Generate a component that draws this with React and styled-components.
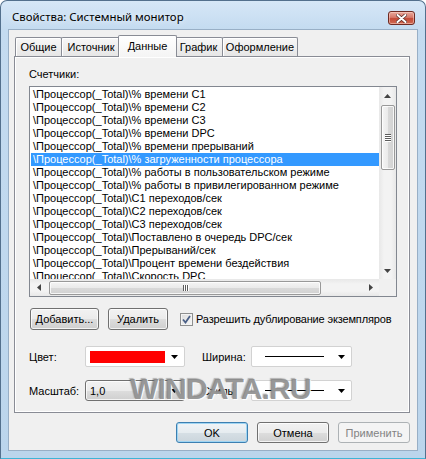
import React from 'react';
import styled, { createGlobalStyle, css } from 'styled-components';

const GlobalStyle = createGlobalStyle`
  html, body {
    margin: 0;
    padding: 0;
    background: #ffffff;
  }
  * {
    box-sizing: border-box;
  }
`;

const uiFont = `"Liberation Sans", Arial, sans-serif`;

const counters = [
  '\\Процессор(_Total)\\% времени C1',
  '\\Процессор(_Total)\\% времени C2',
  '\\Процессор(_Total)\\% времени C3',
  '\\Процессор(_Total)\\% времени DPC',
  '\\Процессор(_Total)\\% времени прерываний',
  '\\Процессор(_Total)\\% загруженности процессора',
  '\\Процессор(_Total)\\% работы в пользовательском режиме',
  '\\Процессор(_Total)\\% работы в привилегированном режиме',
  '\\Процессор(_Total)\\C1 переходов/сек',
  '\\Процессор(_Total)\\C2 переходов/сек',
  '\\Процессор(_Total)\\C3 переходов/сек',
  '\\Процессор(_Total)\\Поставлено в очередь DPC/сек',
  '\\Процессор(_Total)\\Прерываний/сек',
  '\\Процессор(_Total)\\Процент времени бездействия',
  '\\Процессор(_Total)\\Скорость DPC',
];

const tabs = [
  { title: 'Общие', width: 47 },
  { title: 'Источник', width: 60 },
  { title: 'Данные', width: 55 },
  { title: 'График', width: 49 },
  { title: 'Оформление', width: 76 },
];

const Window = styled.div`
  position: relative;
  width: 426px;
  height: 459px;
  display: flex;
  flex-direction: column;
  padding: 0 7px 7px 7px;
  border: 1px solid #53708d;
  border-bottom-color: #3fb4d6;
  border-radius: 7px 7px 0 0;
  background: linear-gradient(180deg, #d6e7f7 0, #c4dbf0 28px, #bbd5ec 100%);
  font-family: ${uiFont};
  font-size: 11px;
  color: #000;
`;

const TitleBar = styled.div`
  height: 28px;
  display: flex;
  align-items: flex-start;
  padding: 8px 3px 0 4px;
`;

const Title = styled.div`
  font-family: "Noto Sans", "Open Sans", sans-serif;
  font-size: 11.4px;
  line-height: 16px;
  color: #000;
  text-shadow: 0 0 6px rgba(255, 255, 255, 0.9);
`;

const CloseButton = styled.div`
  margin: 2px 0 0 auto;
  width: 27px;
  height: 14px;
  display: flex;
  align-items: center;
  justify-content: center;
  border: 1px solid #6e2a22;
  border-radius: 3px;
  background: linear-gradient(180deg, #e9a99c 0%, #d7796a 45%, #c44a37 55%, #cf6a52 100%);
  box-shadow: inset 0 0 0 1px rgba(255, 220, 210, 0.5);
`;

const Client = styled.div`
  flex: 1;
  display: flex;
  flex-direction: column;
  padding: 5px 7px 7px 5px;
  background: #f0f0f0;
  border: 1px solid #98afc6;
`;

const TabStrip = styled.div`
  position: relative;
  z-index: 1;
  height: 22px;
  display: flex;
  align-items: flex-end;
  padding-left: 1px;
  margin-bottom: -1px;
`;

const Tab = styled.div`
  width: ${({ $width }) => $width}px;
  height: 19px;
  margin-bottom: 1px;
  display: flex;
  align-items: center;
  justify-content: center;
  border: 1px solid #898c95;
  border-bottom: none;
  border-radius: 2px 2px 0 0;
  background: linear-gradient(180deg, #f7f7f7 0%, #e6e6e6 100%);
  box-shadow: inset 1px 1px 0 #ffffff;
  white-space: nowrap;
  margin-left: -1px;
  &:first-child {
    margin-left: 0;
  }

  ${({ $active }) =>
    $active &&
    css`
      width: ${({ $width }) => $width + 4}px;
      height: 22px;
      margin: 0 -2px 0 -3px;
      padding-bottom: 2px;
      background: linear-gradient(180deg, #ffffff 0%, #f4f4f4 100%);
      position: relative;
      z-index: 2;
    `}
`;

const Panel = styled.div`
  height: 357px;
  display: flex;
  flex-direction: column;
  padding: 11px 12px 0 14px;
  border: 1px solid #898c95;
  background: #f0f0f0;
  box-shadow: inset 0 0 0 1px #ffffff;
`;

const Label = styled.div`
  height: 13px;
  line-height: 13px;
  white-space: nowrap;
`;

const ListBox = styled.div`
  margin-top: 5px;
  width: 368px;
  height: 211px;
  display: grid;
  grid-template-columns: 1fr 17px;
  grid-template-rows: 1fr 17px;
  border: 1px solid #828790;
  background: #ffffff;
`;

const Rows = styled.div`
  overflow: hidden;
  padding: 1px 0 0 1px;
`;

const Row = styled.div`
  height: 13px;
  line-height: 13px;
  padding-left: 2px;
  white-space: nowrap;
  background: ${({ $selected }) => ($selected ? '#3399ff' : 'transparent')};
  color: ${({ $selected }) => ($selected ? '#ffffff' : '#000000')};
`;

const VScroll = styled.div`
  display: flex;
  flex-direction: column;
  background: linear-gradient(90deg, #e8e8e8 0%, #f3f3f3 30%, #f3f3f3 70%, #e8e8e8 100%);
`;

const HScroll = styled.div`
  display: flex;
  background: linear-gradient(180deg, #e8e8e8 0%, #f3f3f3 30%, #f3f3f3 70%, #e8e8e8 100%);
`;

const Corner = styled.div`
  background: #f0f0f0;
`;

const ArrowButton = styled.div`
  width: 17px;
  height: 17px;
  flex: none;
  display: flex;
  align-items: center;
  justify-content: center;
`;

const Track = styled.div`
  flex: 1;
  display: flex;
  flex-direction: ${({ $vertical }) => ($vertical ? 'column' : 'row')};
`;

const Thumb = styled.div`
  display: flex;
  flex-direction: ${({ $vertical }) => ($vertical ? 'column' : 'row')};
  align-items: center;
  justify-content: center;
  gap: 1px;
  border: 1px solid #999999;
  border-radius: 2px;
  box-shadow: inset 0 0 0 1px rgba(255, 255, 255, 0.8);
  ${({ $vertical }) =>
    $vertical
      ? css`
          margin: 1px 1px 0 2px;
          background: linear-gradient(90deg, #f5f5f5 0%, #eaeaea 50%, #d9d9d9 51%, #d2d2d2 100%);
        `
      : css`
          margin: 2px 0 1px 2px;
          background: linear-gradient(180deg, #f5f5f5 0%, #eaeaea 50%, #d9d9d9 51%, #d2d2d2 100%);
        `}
`;

const Grip = styled.div`
  background: #5c5c5c;
  box-shadow: ${({ $vertical }) => ($vertical ? '0 1px 0 #ffffff' : '1px 0 0 #ffffff')};
  ${({ $vertical }) =>
    $vertical
      ? css`
          width: 6px;
          height: 1px;
        `
      : css`
          width: 1px;
          height: 6px;
        `}
`;

const ActionRow = styled.div`
  margin-top: 11px;
  height: 22px;
  display: flex;
  align-items: center;
`;

const Button = styled.div`
  width: ${({ $width }) => $width}px;
  height: ${({ $height }) => $height || 22}px;
  margin-left: ${({ $gap }) => $gap || 0}px;
  display: flex;
  align-items: center;
  justify-content: center;
  border: 1px solid #707070;
  border-radius: 3px;
  background: linear-gradient(180deg, #f2f2f2 0%, #ebebeb 50%, #dddddd 51%, #cfcfcf 100%);
  box-shadow: inset 0 0 0 1px rgba(255, 255, 255, 0.75);
  white-space: nowrap;

  ${({ $default }) =>
    $default &&
    css`
      border-color: #3c7fb1;
      box-shadow: inset 0 0 0 1px #9fd5f3;
      background: linear-gradient(180deg, #f0f4f7 0%, #e6ecf0 50%, #d6dfe5 51%, #cbd5dc 100%);
    `}

  ${({ $disabled }) =>
    $disabled &&
    css`
      border-color: #adb2b5;
      background: #f4f4f4;
      box-shadow: none;
      color: #838383;
    `}
`;

const CheckBox = styled.div`
  margin-left: 12px;
  width: 13px;
  height: 13px;
  display: flex;
  align-items: center;
  justify-content: center;
  border: 1px solid #8e8f8f;
  background: linear-gradient(135deg, #dcdcdc 0%, #f6f6f6 100%);
  box-shadow: inset 0 0 0 1px #f4f4f4;
`;

const CheckLabel = styled.span`
  margin-left: 3px;
  white-space: nowrap;
  letter-spacing: -0.15px;
`;

const Fields = styled.div`
  margin-top: 16px;
  display: grid;
  grid-template-columns: 56px 100px 17px 49px 101px;
  grid-template-rows: 21px 21px;
  row-gap: 13px;
  align-items: center;
`;

const FieldLabel = styled.div`
  grid-column: ${({ $col }) => $col};
  white-space: nowrap;
`;

const Combo = styled.div`
  height: 21px;
  display: flex;
  align-items: center;
  padding: 0 6px 0 4px;
  border: 1px solid #d2d2d2;
  border-radius: 2px;
  background: #ffffff;

  ${({ $button }) =>
    $button &&
    css`
      border-color: #707070;
      border-radius: 3px;
      background: linear-gradient(180deg, #f2f2f2 0%, #ebebeb 50%, #dddddd 51%, #cfcfcf 100%);
      box-shadow: inset 0 0 0 1px rgba(255, 255, 255, 0.75);
    `}
`;

const Swatch = styled.div`
  width: 75px;
  height: 12px;
  background: #ff0000;
`;

const LineSample = styled.div`
  margin-left: 9px;
  width: 59px;
  height: 1px;
  background: #000000;
`;

const ComboValue = styled.span`
  flex: 1;
`;

const DropArrow = styled.svg`
  margin-left: auto;
  flex: none;
`;

const DialogButtons = styled.div`
  margin-top: 9px;
  display: flex;
  justify-content: flex-end;
  gap: 9px;
`;

const Watermark = styled.div`
  position: absolute;
  left: 129px;
  top: 371px;
  font-family: "Liberation Sans", Arial, sans-serif;
  font-weight: bold;
  font-size: 30px;
  letter-spacing: -0.8px;
  color: rgba(135, 135, 135, 0.85);
  text-shadow: 1px 1px 0 rgba(255, 255, 255, 0.9), -1px -1px 1px rgba(60, 60, 60, 0.35);
  pointer-events: none;
`;

const Triangle = ({ dir }) => {
  const points = {
    up: '0,4 7,4 3.5,0',
    down: '0,0 7,0 3.5,4',
    left: '4,0 4,7 0,3.5',
    right: '0,0 0,7 4,3.5',
  }[dir];
  const vertical = dir === 'up' || dir === 'down';
  return (
    <svg width={vertical ? 7 : 4} height={vertical ? 4 : 7}>
      <polygon points={points} fill="#444444" />
    </svg>
  );
};

const Arrow = () => (
  <DropArrow width="7" height="4">
    <polygon points="0,0 7,0 3.5,4" fill="#000000" />
  </DropArrow>
);

const App = () => (
  <>
    <GlobalStyle />
    <Window>
      <TitleBar>
        <Title>Свойства: Системный монитор</Title>
        <CloseButton>
          <svg width="11" height="9" viewBox="0 0 11 9">
            <path d="M1.5 1 L9.5 8 M9.5 1 L1.5 8" stroke="#5a2a24" strokeWidth="3.4" strokeLinecap="round" />
            <path d="M1.5 1 L9.5 8 M9.5 1 L1.5 8" stroke="#ffffff" strokeWidth="2" strokeLinecap="round" />
          </svg>
        </CloseButton>
      </TitleBar>

      <Client>
        <TabStrip>
          {tabs.map((tab) => (
            <Tab key={tab.title} $width={tab.width} $active={tab.title === 'Данные'}>
              {tab.title}
            </Tab>
          ))}
        </TabStrip>

        <Panel>
          <Label>Счетчики:</Label>
          <ListBox>
            <Rows>
              {counters.map((name, i) => (
                <Row key={name} $selected={i === 5}>
                  {name}
                </Row>
              ))}
            </Rows>
            <VScroll>
              <ArrowButton>
                <Triangle dir="up" />
              </ArrowButton>
              <Track $vertical>
                <Thumb $vertical style={{ height: 65 }}>
                  <Grip $vertical />
                  <Grip $vertical />
                  <Grip $vertical />
                  <Grip $vertical />
                </Thumb>
              </Track>
              <ArrowButton>
                <Triangle dir="down" />
              </ArrowButton>
            </VScroll>
            <HScroll>
              <ArrowButton>
                <Triangle dir="left" />
              </ArrowButton>
              <Track>
                <Thumb style={{ width: 272 }}>
                  <Grip />
                  <Grip />
                  <Grip />
                </Thumb>
              </Track>
              <ArrowButton>
                <Triangle dir="right" />
              </ArrowButton>
            </HScroll>
            <Corner />
          </ListBox>

          <ActionRow>
            <Button $width={69} $gap={1}>Добавить...</Button>
            <Button $width={60} $gap={9}>Удалить</Button>
            <CheckBox>
              <svg width="9" height="9" viewBox="0 0 9 9">
                <path d="M1 4.5 L3.5 7.5 L8 1" fill="none" stroke="#4a5f86" strokeWidth="1.8" />
              </svg>
            </CheckBox>
            <CheckLabel>Разрешить дублирование экземпляров</CheckLabel>
          </ActionRow>

          <Fields>
            <FieldLabel $col={1}>Цвет:</FieldLabel>
            <Combo>
              <Swatch />
              <Arrow />
            </Combo>
            <FieldLabel $col={4}>Ширина:</FieldLabel>
            <Combo>
              <LineSample />
              <Arrow />
            </Combo>

            <FieldLabel $col={1}>Масштаб:</FieldLabel>
            <Combo $button>
              <ComboValue>1,0</ComboValue>
              <Arrow />
            </Combo>
            <FieldLabel $col={4}>Стиль:</FieldLabel>
            <Combo>
              <LineSample />
              <Arrow />
            </Combo>
          </Fields>
        </Panel>

        <DialogButtons>
          <Button $width={72} $height={21} $default>OK</Button>
          <Button $width={72} $height={21}>Отмена</Button>
          <Button $width={72} $height={21} $disabled>Применить</Button>
        </DialogButtons>
      </Client>

      <Watermark>WINDATA.RU</Watermark>
    </Window>
  </>
);

export default App;
